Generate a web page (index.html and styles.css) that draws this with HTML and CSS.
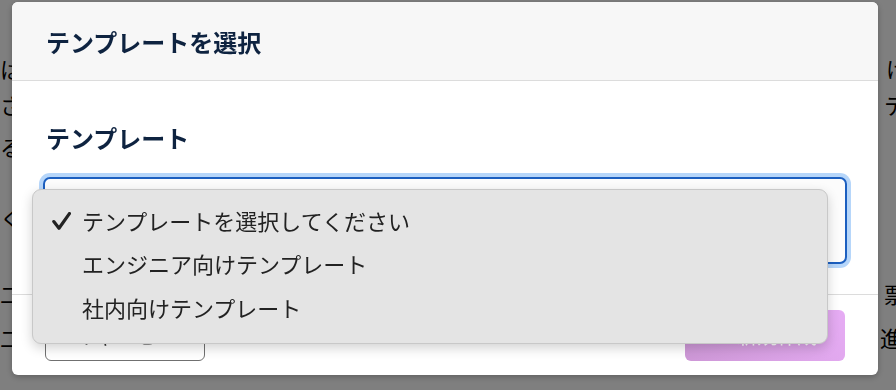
FILE: index.html
```html
<!DOCTYPE html>
<html lang="ja">
<head>
<meta charset="utf-8">
<title>テンプレートを選択</title>
<link rel="stylesheet" href="styles.css">
</head>
<body>
<div class="page">
  <div class="line row1"><span class="l">はじめに</span><span class="r r1">けど</span></div>
  <div class="line row2"><span class="l">さらに</span><span class="r r2">テキ</span></div>
  <div class="line row3"><span class="l">るい</span><span class="r"></span></div>
  <div class="line row4"><span class="l">く</span><span class="r"></span></div>
  <div class="line row5"><span class="l">二</span><span class="r r5">票メ</span></div>
  <div class="line row6"><span class="l">二</span><span class="r r6">進と</span></div>
</div>

<div class="overlay">
  <div class="modal">
    <div class="modal-header">
      <h2 class="modal-title">テンプレートを選択</h2>
    </div>
    <div class="modal-body">
      <div class="field-label">テンプレート</div>
      <div class="select-wrap">
        <div class="select"></div>
        <ul class="popup">
          <li class="option selected">
            <span class="check"><svg width="19" height="18" viewBox="0 0 19 18"><path d="M1.8 9.6 L7 16.2 L17.4 1.6" fill="none" stroke="#222" stroke-width="3.2" stroke-linecap="round" stroke-linejoin="round"/></svg></span>
            <span>テンプレートを選択してください</span>
          </li>
          <li class="option"><span class="check"></span><span>エンジニア向けテンプレート</span></li>
          <li class="option"><span class="check"></span><span>社内向けテンプレート</span></li>
        </ul>
      </div>
    </div>
    <div class="modal-footer">
      <button class="btn btn-cancel">キャンセル</button>
      <button class="btn btn-create">＋ 新規作成</button>
    </div>
  </div>
</div>
</body>
</html>
```

FILE: styles.css
```css
* { box-sizing: border-box; }

html, body {
  margin: 0;
  padding: 0;
  width: 896px;
  height: 390px;
  overflow: hidden;
  background: #ffffff;
  font-family: "Noto Sans CJK JP", "Noto Sans", sans-serif;
}

/* background page */
.page {
  padding-top: 50px;
  font-size: 22px;
  color: #000;
}
.line {
  display: flex;
  justify-content: space-between;
  height: 36px;
  line-height: 36px;
  white-space: nowrap;
}
.row3 { margin-top: 6px; }
.row4 { margin-top: 35px; }
.row5 { margin-top: 40px; }
.row6 { margin-top: 8px; }
.r1 { margin-right: -34px; }
.r2 { margin-right: -32px; }
.r5 { margin-right: -32px; }
.r6 { margin-right: -28px; }

/* overlay */
.overlay {
  position: fixed;
  inset: 0;
  background: rgba(0, 0, 0, 0.5);
  padding: 2px 18px 15px 12px;
}

.modal {
  position: relative;
  width: 866px;
  height: 373px;
  background: #ffffff;
  border-radius: 6px;
  box-shadow: 0 2px 6px rgba(0, 0, 0, 0.25);
  display: flex;
  flex-direction: column;
}

.modal-header {
  height: 79px;
  background: #f7f7f7;
  border-bottom: 1px solid #dcdcdc;
  border-radius: 6px 6px 0 0;
  padding: 0 31px 0 34px;
  display: flex;
  align-items: center;
}
.modal-title {
  margin: 0;
  font-size: 24px;
  font-weight: 700;
  color: #0e2340;
  line-height: 32px;
  position: relative;
  top: 1px;
}

.modal-body {
  padding: 41px 31px 30px 31px;
  border-bottom: 1px solid #dcdcdc;
}
.field-label {
  font-size: 24px;
  font-weight: 700;
  color: #0e2340;
  line-height: 32px;
  padding-left: 3px;
  margin-bottom: 23px;
}

.select-wrap {
  position: relative;
}
.select {
  height: 87px;
  border: 2px solid #1c5fc0;
  border-radius: 7px;
  background: #fcfcfc;
  box-shadow: 0 0 0 4px #b6d6fa;
}

.popup {
  position: absolute;
  left: -11px;
  top: 12px;
  width: 796px;
  margin: 0;
  padding: 8px 0 14px;
  list-style: none;
  background: #e4e4e4;
  border: 1px solid #c8c8c8;
  border-radius: 9px;
  box-shadow: 0 4px 12px rgba(0, 0, 0, 0.18);
  z-index: 5;
}
.option {
  display: flex;
  align-items: center;
  height: 43.5px;
  font-size: 22px;
  color: #222222;
  padding-left: 19px;
}
.check {
  width: 30px;
  display: flex;
  align-items: center;
}
.check svg { display: block; margin-top: 2px; }

.modal-footer {
  flex: 1;
  display: flex;
  justify-content: space-between;
  align-items: center;
  padding: 0 33px;
}
.btn {
  width: 160px;
  height: 51px;
  font-family: "Noto Sans CJK JP", "Noto Sans", sans-serif;
  font-size: 20px;
  border-radius: 6px;
}
.btn-cancel {
  background: #ffffff;
  border: 1.5px solid #707070;
  color: #333;
}
.btn-create {
  border: none;
  color: #ffffff;
  background: linear-gradient(60deg, #cd97d6 0%, #e6acf4 100%);
}
```
